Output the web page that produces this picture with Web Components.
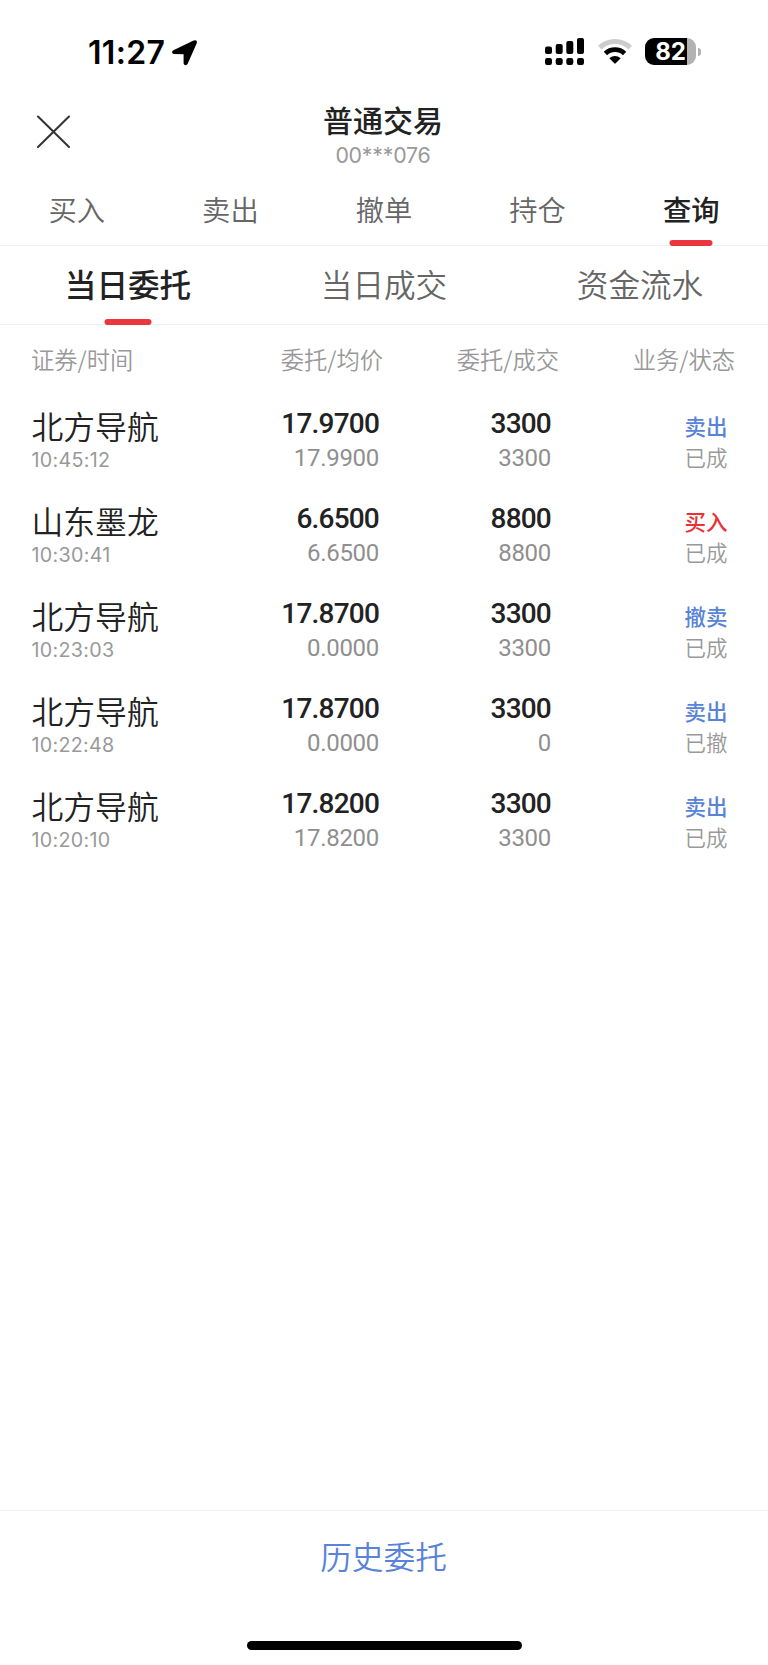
<!DOCTYPE html>
<html lang="zh-CN">
<head>
<meta charset="utf-8">
<meta name="viewport" content="width=device-width, initial-scale=1">
<title>普通交易</title>
<style>
    html, body {
        margin: 0;
        height: 100%;
    }

    body {
        background: #fff;
        color: #222;
        font-family: "Noto Sans CJK SC", sans-serif;
        font-weight: 350;
    }
</style>
</head>
<body>
<trade-app></trade-app>

<script>
class StatusBar extends HTMLElement {
    constructor() {
        super();
        this.attachShadow({ mode: 'open' });
        this.shadowRoot.innerHTML = `
            <style>
                :host {
                    display: flex;
                    justify-content: space-between;
                    align-items: center;
                    height: 103px;
                    padding: 0 67px 0 88px;
                    box-sizing: border-box;
                    color: #000;
                    font-family: Inter, sans-serif;
                }

                .left, .right {
                    display: flex;
                    align-items: center;
                }

                .time {
                    font-size: 32px;
                    line-height: 40px;
                    font-weight: 600;
                    letter-spacing: 0.3px;
                    width: 84px;
                    white-space: nowrap;
                    transform: translateY(1px);
                }

                svg {
                    display: block;
                }

                .arrow {
                    margin-top: 2px;
                }

                .wifi {
                    margin: 0 13px 0 14px;
                }

                .battery {
                    display: flex;
                    align-items: center;
                    gap: 2px;
                }

                .level {
                    width: 51px;
                    height: 27px;
                    border-radius: 9px;
                    background: linear-gradient(90deg, #000 42px, #b2b2b2 42px);
                    color: #fff;
                    font-size: 24px;
                    line-height: 27px;
                    font-weight: 700;
                    text-align: center;
                }

                .cap {
                    width: 3px;
                    height: 8px;
                    border-radius: 0 4px 4px 0;
                    background: #b2b2b2;
                }
            </style>

            <div class="left">
                <span class="time">11:27</span>
                <svg class="arrow" width="25" height="26" viewBox="0 0 25 26">
                    <path d="M1.4 10.2 21.6.5Q26-.8 24.6 3.4L15.8 23.6Q14.9 25.6 13.2 25.3 11.6 24.9 11.6 23.2V14.2L2 14Q.1 13.8.1 12.2.1 10.9 1.4 10.2Z"/>
                </svg>
            </div>
            <div class="right">
                <svg width="39" height="27" viewBox="0 0 39 27">
                    <rect x="0" y="8.5" width="7" height="7.5" rx="2"/>
                    <rect x="10.7" y="6" width="7" height="10" rx="2"/>
                    <rect x="21.3" y="3" width="7" height="13" rx="2"/>
                    <rect x="32" y="0" width="7" height="16" rx="2"/>
                    <rect x="0" y="20" width="7" height="7" rx="2.2"/>
                    <rect x="10.7" y="20" width="7" height="7" rx="2.2"/>
                    <rect x="21.3" y="20" width="7" height="7" rx="2.2"/>
                    <rect x="32" y="20" width="7" height="7" rx="2.2"/>
                </svg>
                <svg class="wifi" width="34" height="27" viewBox="0 0 34 27">
                    <path d="M1.8 9.6A22 22 0 0 1 32.2 9.6" fill="none" stroke="#ccc" stroke-width="5"/>
                    <path d="M7.4 15.4A14 14 0 0 1 26.6 15.4" fill="none" stroke="#000" stroke-width="4.8"/>
                    <path d="M11.3 20.2Q17 15.8 22.7 20.2L17.7 25.3Q17 26 16.3 25.3Z"/>
                </svg>
                <div class="battery">
                    <div class="level">82</div>
                    <div class="cap"></div>
                </div>
            </div>
        `;
    }
}

class TradeHeader extends HTMLElement {
    constructor() {
        super();
        this.attachShadow({ mode: 'open' });
        this.shadowRoot.innerHTML = `
            <style>
                :host {
                    display: grid;
                    grid-template-columns: 70px 1fr 72px;
                    height: 77px;
                }

                svg {
                    display: block;
                    margin: 12px 0 0 37px;
                }

                .text {
                    text-align: center;
                }

                .title {
                    font-size: 30px;
                    line-height: 32px;
                    font-weight: 500;
                }

                .account {
                    margin-top: 6px;
                    font-family: Inter, sans-serif;
                    font-size: 21.3px;
                    line-height: 28px;
                    font-weight: 400;
                    letter-spacing: -0.2px;
                    color: #999;
                }
            </style>

            <svg width="33" height="33" viewBox="0 0 33 33">
                <path d="M1 1.5 32 32M32 1.5 1 32" fill="none" stroke="#333" stroke-width="2" stroke-linecap="round"/>
            </svg>
            <div class="text">
                <div class="title"><slot></slot></div>
                <div class="account"><slot name="account"></slot></div>
            </div>
        `;
    }
}

class TabBar extends HTMLElement {
    constructor() {
        super();
        this.attachShadow({ mode: 'open' });
        this.shadowRoot.innerHTML = `
            <style>
                :host {
                    display: grid;
                    grid-auto-flow: column;
                    grid-auto-columns: 1fr;
                    box-sizing: border-box;
                    height: var(--bar-height);
                    border-bottom: 1px solid #f2f2f2;
                    font-size: var(--tab-size);
                }
            </style>

            <slot></slot>
        `;
    }
}

class TabItem extends HTMLElement {
    constructor() {
        super();
        this.attachShadow({ mode: 'open' });
        this.shadowRoot.innerHTML = `
            <style>
                :host {
                    display: block;
                    position: relative;
                    text-align: center;
                    line-height: var(--tab-line);
                    color: #666;
                }

                :host([active]) {
                    color: #222;
                    font-weight: 500;
                }

                /* The marker lies over the bottom border of the bar */
                :host([active])::after {
                    content: "";
                    position: absolute;
                    left: 50%;
                    bottom: -1px;
                    width: var(--marker-width);
                    height: 6px;
                    border-radius: 3px;
                    background: #eb363e;
                    transform: translateX(-50%);
                }
            </style>

            <slot></slot>
        `;
    }
}

class OrderHead extends HTMLElement {
    constructor() {
        super();
        this.attachShadow({ mode: 'open' });
        this.shadowRoot.innerHTML = `
            <style>
                :host {
                    display: grid;
                    grid-template-columns: 201px 151px 176px 176px;
                    padding-left: 31px;
                    height: 74px;
                    font-size: 23.3px;
                    line-height: 69px;
                    color: #999;
                }

                span + span {
                    text-align: right;
                }
            </style>

            <span>证券/时间</span>
            <span>委托/均价</span>
            <span>委托/成交</span>
            <span>业务/状态</span>
        `;
    }
}

class OrderRow extends HTMLElement {
    constructor() {
        super();
        this.attachShadow({ mode: 'open' });
    }

    connectedCallback() {
        this._render();
    }

    _render() {
        const get = name => this.getAttribute(name);

        this.shadowRoot.innerHTML = `
            <style>
                :host {
                    display: grid;
                    grid-template-columns: 200.5px 147px 172px 176.5px;
                    padding-left: 31.5px;
                    height: 94.9px;
                }

                .cell + .cell {
                    text-align: right;
                }

                .name {
                    font-size: 31.8px;
                    line-height: 52px;
                }

                .time {
                    font-family: Inter, sans-serif;
                    font-size: 19.7px;
                    line-height: 22px;
                    font-weight: 400;
                    color: #999;
                    margin-top: -2px;
                    letter-spacing: 0.3px;
                }

                .main, .sub {
                    font-family: Roboto, sans-serif;
                }

                .main {
                    font-size: 28px;
                    line-height: 50px;
                    font-weight: 500;
                    letter-spacing: -0.8px;
                }

                .sub {
                    font-size: 24px;
                    line-height: 28px;
                    margin-top: -5px;
                    color: #8f8f8f;
                    font-weight: 400;
                    letter-spacing: -0.3px;
                }

                .kind {
                    font-size: 21.5px;
                    line-height: 53px;
                    font-weight: 500;
                    color: #5883d8;
                }

                .kind.buy {
                    color: #ed2f38;
                }

                .state {
                    font-size: 21.5px;
                    line-height: 28px;
                    margin-top: -9px;
                    color: #999;
                }
            </style>

            <div class="cell">
                <div class="name">${get('name')}</div>
                <div class="time">${get('time')}</div>
            </div>
            <div class="cell">
                <div class="main">${get('price')}</div>
                <div class="sub">${get('average')}</div>
            </div>
            <div class="cell">
                <div class="main">${get('amount')}</div>
                <div class="sub">${get('filled')}</div>
            </div>
            <div class="cell">
                <div class="kind ${get('kind') === '买入' ? 'buy' : ''}">${get('kind')}</div>
                <div class="state">${get('state')}</div>
            </div>
        `;
    }
}

class HistoryFooter extends HTMLElement {
    constructor() {
        super();
        this.attachShadow({ mode: 'open' });
        this.shadowRoot.innerHTML = `
            <style>
                :host {
                    display: flex;
                    flex-direction: column;
                    align-items: center;
                    box-sizing: border-box;
                    height: 155px;
                    border-top: 1px solid #f2f2f2;
                }

                .link {
                    font-size: 31.7px;
                    line-height: 89px;
                    padding-right: 1px;
                    color: #5883d8;
                }

                .indicator {
                    width: 275px;
                    height: 9px;
                    margin-top: 41px;
                    border-radius: 5px;
                    background: #000;
                }
            </style>

            <div class="link"><slot></slot></div>
            <div class="indicator"></div>
        `;
    }
}

class TradeApp extends HTMLElement {
    constructor() {
        super();
        this.attachShadow({ mode: 'open' });
        this.shadowRoot.innerHTML = `
            <style>
                :host {
                    display: flex;
                    flex-direction: column;
                    height: 1665px;
                    overflow: hidden;
                }

                .menu {
                    --bar-height: 66px;
                    --tab-size: 28.3px;
                    --tab-line: 58px;
                    --marker-width: 43px;
                }

                .query {
                    --bar-height: 79px;
                    --tab-size: 31.6px;
                    --tab-line: 75px;
                    --marker-width: 47px;
                }

                main {
                    flex: 1;
                }
            </style>

            <status-bar></status-bar>
            <trade-header>普通交易<span slot="account">00***076</span></trade-header>
            <tab-bar class="menu">
                <tab-item>买入</tab-item>
                <tab-item>卖出</tab-item>
                <tab-item>撤单</tab-item>
                <tab-item>持仓</tab-item>
                <tab-item active>查询</tab-item>
            </tab-bar>
            <tab-bar class="query">
                <tab-item active>当日委托</tab-item>
                <tab-item>当日成交</tab-item>
                <tab-item>资金流水</tab-item>
            </tab-bar>
            <main>
                <order-head></order-head>
                <order-row name="北方导航" time="10:45:12" price="17.9700" average="17.9900" amount="3300" filled="3300" kind="卖出" state="已成"></order-row>
                <order-row name="山东墨龙" time="10:30:41" price="6.6500" average="6.6500" amount="8800" filled="8800" kind="买入" state="已成"></order-row>
                <order-row name="北方导航" time="10:23:03" price="17.8700" average="0.0000" amount="3300" filled="3300" kind="撤卖" state="已成"></order-row>
                <order-row name="北方导航" time="10:22:48" price="17.8700" average="0.0000" amount="3300" filled="0" kind="卖出" state="已撤"></order-row>
                <order-row name="北方导航" time="10:20:10" price="17.8200" average="17.8200" amount="3300" filled="3300" kind="卖出" state="已成"></order-row>
            </main>
            <history-footer>历史委托</history-footer>
        `;
    }
}

customElements.define('status-bar', StatusBar);
customElements.define('trade-header', TradeHeader);
customElements.define('tab-bar', TabBar);
customElements.define('tab-item', TabItem);
customElements.define('order-head', OrderHead);
customElements.define('order-row', OrderRow);
customElements.define('history-footer', HistoryFooter);
customElements.define('trade-app', TradeApp);
</script>
</body>
</html>
